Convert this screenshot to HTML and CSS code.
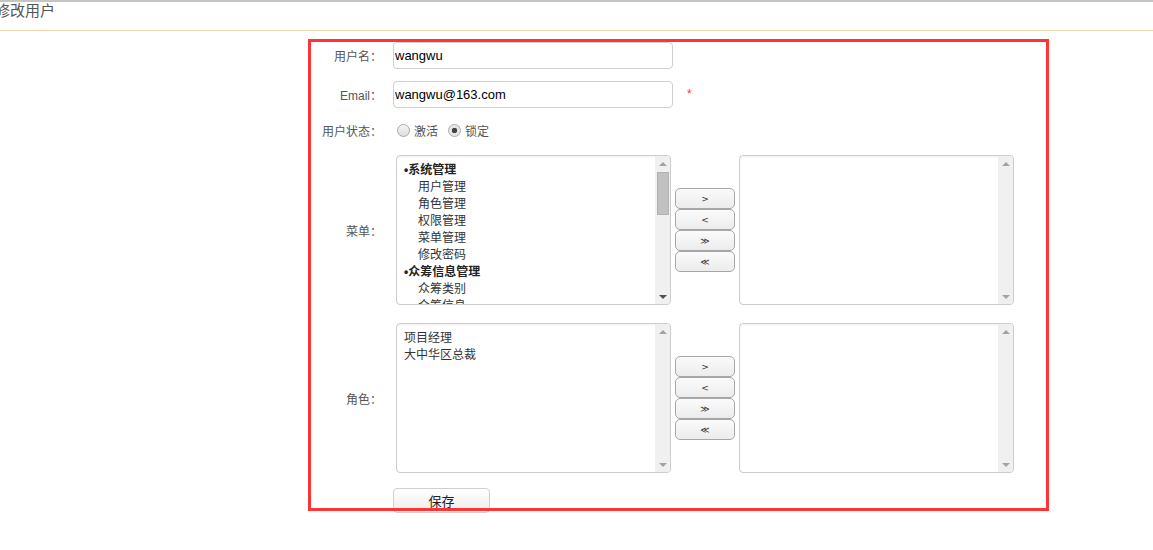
FILE: index.html
```html
<!DOCTYPE html>
<html lang="zh-CN">
<head>
  <meta charset="UTF-8">
  <title>修改用户</title>
  <link rel="stylesheet" href="styles.css">
</head>
<body>
  <div class="topline"></div>
  <div class="header"><h2 class="title">修改用户</h2></div>

  <form class="user-form">
    <div class="row row-name">
      <label class="label">用户名：</label>
      <input class="text" type="text" value="wangwu">
    </div>

    <div class="row row-email">
      <label class="label">Email：</label>
      <input class="text" type="text" value="wangwu@163.com">
      <span class="required">*</span>
    </div>

    <div class="row row-status">
      <label class="label">用户状态：</label>
      <div class="radios">
        <label class="radio"><input type="radio" name="status"> 激活</label>
        <label class="radio"><input type="radio" name="status" checked> 锁定</label>
      </div>
    </div>

    <div class="row row-menu">
      <label class="label">菜单：</label>
      <div class="picker">
        <div class="listbox">
          <div class="list-items">
            <div class="group">•系统管理</div>
            <div class="item">用户管理</div>
            <div class="item">角色管理</div>
            <div class="item">权限管理</div>
            <div class="item">菜单管理</div>
            <div class="item">修改密码</div>
            <div class="group">•众筹信息管理</div>
            <div class="item">众筹类别</div>
            <div class="item">众筹信息</div>
          </div>
          <div class="scrollbar">
            <span class="arrow up off"></span>
            <div class="track"><div class="thumb"></div></div>
            <span class="arrow down"></span>
          </div>
        </div>
        <div class="move-buttons">
          <button type="button">&gt;</button>
          <button type="button">&lt;</button>
          <button type="button">≫</button>
          <button type="button">≪</button>
        </div>
        <div class="listbox">
          <div class="list-items"></div>
          <div class="scrollbar">
            <span class="arrow up off"></span>
            <div class="track"></div>
            <span class="arrow down off"></span>
          </div>
        </div>
      </div>
    </div>

    <div class="row row-role">
      <label class="label">角色：</label>
      <div class="picker">
        <div class="listbox">
          <div class="list-items">
            <div class="option">项目经理</div>
            <div class="option">大中华区总裁</div>
          </div>
          <div class="scrollbar">
            <span class="arrow up off"></span>
            <div class="track"></div>
            <span class="arrow down off"></span>
          </div>
        </div>
        <div class="move-buttons">
          <button type="button">&gt;</button>
          <button type="button">&lt;</button>
          <button type="button">≫</button>
          <button type="button">≪</button>
        </div>
        <div class="listbox">
          <div class="list-items"></div>
          <div class="scrollbar">
            <span class="arrow up off"></span>
            <div class="track"></div>
            <span class="arrow down off"></span>
          </div>
        </div>
      </div>
    </div>

    <div class="row row-save">
      <span class="label"></span>
      <button type="button" class="save">保存</button>
    </div>
  </form>

  <!-- red annotation frame from the screenshot -->
  <div class="mark"></div>
</body>
</html>
```

FILE: styles.css
```css
body {
  margin: 0;
  font-family: "Liberation Sans", "Noto Sans CJK SC", sans-serif;
  font-size: 12px;
  color: #333;
  background: #fff;
  overflow: hidden;
}

.topline {
  height: 2px;
  background: #c4c4c4;
}

.header {
  height: 28px;
  border-bottom: 1px solid #f4d8ad;
}

.title {
  margin: 0 0 0 -5px;
  font-size: 15px;
  font-weight: normal;
  line-height: 18px;
  color: #555;
}

.user-form {
  margin: 11px 0 0 311px;
  width: 735px;
}

.row {
  display: flex;
  align-items: center;
}

.row-email { margin-top: 12px; }
.row-status { margin-top: 12px; height: 20px; }
.row-menu { margin-top: 15px; }
.row-role { margin-top: 18px; }
.row-save { margin-top: 15px; }

.label {
  width: 71px;
  margin-right: 11px;
  text-align: right;
  color: #555;
  flex-shrink: 0;
}

.text {
  box-sizing: border-box;
  width: 280px;
  height: 27px;
  margin: 0;
  padding: 0 1px;
  border: 1px solid #cfcfcf;
  border-radius: 4px;
  font-family: "Liberation Sans", sans-serif;
  font-size: 13px;
  color: #000;
  outline: none;
}

.required {
  margin-left: 14px;
  margin-top: -2px;
  color: #f03c3c;
  font-size: 12px;
}

.radios {
  display: flex;
  gap: 10px;
  margin-left: 4px;
}

.radio {
  display: flex;
  align-items: center;
  color: #555;
}

.radio input {
  appearance: none;
  box-sizing: border-box;
  width: 13px;
  height: 13px;
  margin: 0 4px 0 0;
  border: 1px solid #a9a9a9;
  border-radius: 50%;
  background: linear-gradient(#f6f6f6, #dcdcdc);
}

.radio input:checked {
  background: radial-gradient(circle, #444 0, #444 2.5px, #e2e2e2 3px, #f2f2f2 100%);
}

.picker {
  display: flex;
  align-items: center;
  margin-left: 3px;
}

.listbox {
  box-sizing: border-box;
  display: flex;
  width: 275px;
  height: 150px;
  border: 1px solid #cdcdcd;
  border-radius: 4px;
  overflow: hidden;
  box-shadow: inset 0 1px 2px rgba(0,0,0,0.06);
}

.list-items {
  flex: 1;
  overflow: hidden;
  padding: 6px 0 0 7px;
  line-height: 17px;
  font-family: "Liberation Sans", "Noto Sans CJK SC", sans-serif;
  color: #333;
}

.group {
  font-weight: bold;
  color: #222;
}

.item {
  padding-left: 14px;
}

.scrollbar {
  display: flex;
  flex-direction: column;
  align-items: center;
  width: 15px;
  background: #f0f0f0;
}

.arrow {
  width: 0;
  height: 0;
  margin: 6px 0 5px;
  border-left: 4px solid transparent;
  border-right: 4px solid transparent;
}

.arrow.up { border-bottom: 4px solid #505050; }
.arrow.down { border-top: 4px solid #505050; }
.arrow.up.off { border-bottom-color: #a3a3a3; }
.arrow.down.off { border-top-color: #a3a3a3; }

.track {
  flex: 1;
  align-self: stretch;
  display: flex;
  justify-content: center;
}

.thumb {
  box-sizing: border-box;
  width: 12px;
  height: 43px;
  margin-top: 1px;
  background: #c1c1c1;
  border: 1px solid #b2b2b2;
}

.move-buttons {
  display: flex;
  flex-direction: column;
  margin: 0 4px;
}

.move-buttons button {
  box-sizing: border-box;
  width: 60px;
  height: 21px;
  margin: 0;
  padding: 0;
  border: 1px solid #a6a6a6;
  border-radius: 5px;
  background: linear-gradient(#fbfbfb, #ececec);
  font-family: "DejaVu Sans", sans-serif;
  font-size: 9px;
  color: #333;
}

.option {
  color: #333;
}

.save {
  box-sizing: border-box;
  width: 97px;
  height: 25px;
  margin: 0;
  padding: 0;
  border: 1px solid #cfcfcf;
  border-radius: 4px;
  background: linear-gradient(#ffffff, #ededed);
  font-family: "Noto Sans CJK SC", sans-serif;
  font-size: 13px;
  color: #222;
}

.mark {
  position: absolute;
  left: 308px;
  top: 39px;
  box-sizing: border-box;
  width: 741px;
  height: 472px;
  border: 3px solid #ff3434;
  pointer-events: none;
}
```
